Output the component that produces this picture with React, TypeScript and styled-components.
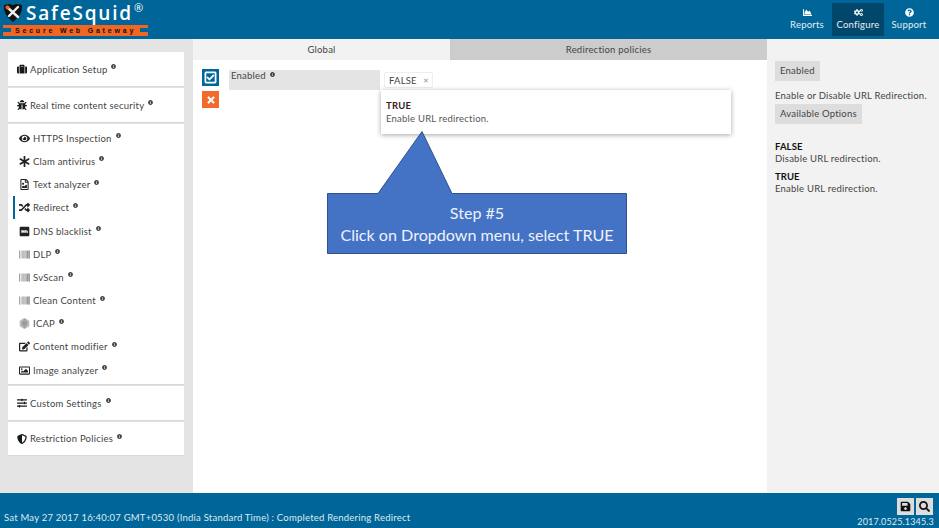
import React from 'react';
import styled, { createGlobalStyle } from 'styled-components';
import {
  FaChartArea, FaCogs, FaQuestionCircle, FaSuitcase, FaBug, FaEye, FaAsterisk, FaRegFileImage, FaRandom,
  FaImdb, FaBarcode, FaEdit, FaRegImage, FaSlidersH, FaShieldAlt, FaInfoCircle, FaRegCheckSquare, FaTimes,
  FaSave, FaSearch, FaFirstOrder,
} from 'react-icons/fa';

const Global = createGlobalStyle`
  html, body { margin: 0; padding: 0; height: 100%; }
  body { font-family: Lato, "Open Sans", sans-serif; font-size: 9.5px; color: #333; overflow: hidden; }
  #root { height: 100%; }
`;

const Page = styled.div`
  position: relative;
  width: 939px;
  height: 528px;
  display: grid;
  grid-template-rows: 39px 1fr 35px;
  overflow: hidden;
`;

const Header = styled.header`
  background: #006699;
  display: flex;
  justify-content: space-between;
  padding-right: 5px;
`;

const Logo = styled.div`
  width: 150px;
  padding: 3px 0 0 3px;
  display: flex;
  flex-direction: column;
`;

const LogoTop = styled.div`
  display: flex;
  align-items: flex-start;
  height: 22px;
  gap: 3px;
`;

const LogoName = styled.span`
  font-family: "Open Sans", sans-serif;
  font-weight: 600;
  font-size: 19px;
  line-height: 21px;
  letter-spacing: 1.8px;
  color: #fff;
  white-space: nowrap;
  sup { font-size: 11px; font-weight: 400; letter-spacing: 0; line-height: 0; vertical-align: 8px; margin-left: 1px; }
`;

const Tagline = styled.div`
  width: 145px;
  height: 11px;
  box-sizing: border-box;
  background: #f26522;
  color: #111;
  font-family: "Liberation Sans", sans-serif;
  font-weight: 700;
  font-size: 7px;
  line-height: 11px;
  letter-spacing: 2.8px;
  padding-left: 12px;
  white-space: nowrap;
  position: relative;
  &::before, &::after {
    content: '';
    position: absolute;
    top: 3px;
    width: 8px;
    height: 4px;
    background: #006699;
  }
  &::before { left: 0; }
  &::after { right: 0; }
`;

const Nav = styled.nav`
  display: flex;
  padding-top: 3px;
  height: 33px;
`;

const NavItem = styled.div<{ $active?: boolean }>`
  width: ${p => (p.$active ? 52 : 50)}px;
  height: 33px;
  display: flex;
  flex-direction: column;
  align-items: center;
  padding-top: 5px;
  box-sizing: border-box;
  gap: 1.5px;
  color: #e6eef3;
  font-size: 9.5px;
  letter-spacing: 0.22px;
  line-height: 12px;
  background: ${p => (p.$active ? '#00476b' : 'transparent')};
  svg { font-size: 9px; color: #fff; display: block; }
`;

const Body = styled.div`
  display: grid;
  grid-template-columns: 193px 574px 172px;
  min-height: 0;
`;

const Sidebar = styled.aside`
  background: #e4e4e4;
  padding: 13px 9px 0 8px;
  display: flex;
  flex-direction: column;
  gap: 2px;
`;

const Card = styled.div<{ $h: number }>`
  background: #fff;
  height: ${p => p.$h}px;
  box-sizing: border-box;
  box-shadow: 0 1px 1px #d8d8d8;
`;

const TopItem = styled.div`
  height: 100%;
  display: flex;
  align-items: center;
  padding-left: 9px;
  font-size: 9.5px;
  letter-spacing: 0.22px;
  color: #444;
  > svg:first-child { width: 10px; height: 10px; margin-right: 3px; color: #1a1a1a; flex: none; }
`;

const SubList = styled.div`
  padding: 2.7px 0 0 5px;
  display: flex;
  flex-direction: column;
`;

const SubItem = styled.div<{ $active?: boolean; $tone?: string }>`
  height: 23.2px;
  display: flex;
  align-items: center;
  padding-left: 4px;
  font-size: 9.5px;
  letter-spacing: 0.22px;
  color: #444;
  border-left: 2px solid ${p => (p.$active ? '#006699' : 'transparent')};
  > svg:first-child { width: 11px; height: 11px; margin-right: 3px; color: ${p => p.$tone || '#222'}; flex: none; }
`;

const Info = styled(FaInfoCircle)`
  width: 5px;
  height: 5px;
  color: #444;
  margin: -5px 0 0 4px;
  flex: none;
`;

const Main = styled.main`
  background: #fff;
  display: flex;
  flex-direction: column;
`;

const Tabs = styled.div`
  display: grid;
  grid-template-columns: 257px 317px;
  height: 21px;
`;

const Tab = styled.div<{ $active?: boolean }>`
  background: ${p => (p.$active ? '#f2f2f2' : '#cccccc')};
  text-align: center;
  line-height: 21px;
  font-size: 9.5px;
  letter-spacing: 0.22px;
  color: #444;
`;

const Form = styled.div`
  display: flex;
  padding: 9px 0 0 9px;
`;

const Actions = styled.div`
  display: flex;
  flex-direction: column;
  gap: 5px;
  width: 27px;
`;

const ActionBtn = styled.div<{ $bg: string; $size: number }>`
  width: 17px;
  height: 17px;
  background: ${p => p.$bg};
  color: #fff;
  display: flex;
  align-items: center;
  justify-content: center;
  svg { width: ${p => p.$size}px; height: ${p => p.$size}px; stroke: #fff; stroke-width: 20; }
`;

const Label = styled.div`
  width: 151px;
  height: 20px;
  margin-top: 1px;
  padding: 0 0 0 2px;
  box-sizing: border-box;
  background: #e4e4e4;
  display: flex;
  align-items: flex-start;
  font-size: 9.5px;
  letter-spacing: 0.22px;
  line-height: 12px;
  color: #444;
  svg { margin-top: 2px; }
`;

const Field = styled.div`
  margin-left: 4px;
`;

const Chip = styled.div`
  width: 49px;
  height: 16px;
  margin-top: 3px;
  box-sizing: border-box;
  border: 1px solid #eeeeee;
  border-radius: 2px;
  display: flex;
  align-items: center;
  padding-left: 4px;
  font-size: 9.5px;
  letter-spacing: 0.2px;
  color: #444;
  span { font-size: 7px; color: #999; margin-left: 6px; letter-spacing: 0; }
`;

const Dropdown = styled.div`
  position: absolute;
  left: 381px;
  top: 90px;
  width: 350px;
  height: 44px;
  box-sizing: border-box;
  background: #fff;
  box-shadow: 0 1px 5px rgba(0, 0, 0, 0.35);
  padding: 9px 5px 0;
  line-height: 13px;
  font-size: 9.5px;
  letter-spacing: 0.22px;
  color: #555;
  strong { display: block; color: #3a2222; font-size: 9.5px; letter-spacing: 0.2px; }
`;

const Callout = styled.div`
  position: absolute;
  left: 327px;
  top: 131px;
  width: 300px;
  height: 123px;
`;

const CalloutArrow = styled.svg`
  position: absolute;
  left: 0;
  top: 0;
`;

const CalloutText = styled.div`
  position: absolute;
  left: 0;
  top: 71px;
  width: 300px;
  text-align: center;
  color: #eef2fa;
  font-family: Lato, sans-serif;
  font-size: 16.1px;
  line-height: 21.5px;
`;

const Panel = styled.aside`
  background: #f2f2f2;
  padding: 22px 4px 0 8px;
  font-size: 9.5px;
  letter-spacing: 0.22px;
  color: #444;
`;

const Tag = styled.div`
  width: fit-content;
  background: #dddddd;
  height: 20px;
  line-height: 20px;
  padding: 0 5px;
`;

const PanelText = styled.div`
  margin: 8px 0 2px;
  line-height: 13px;
  white-space: nowrap;
`;

const Option = styled.div`
  line-height: 11.5px;
  margin-bottom: 8px;
  strong { display: block; color: #111; letter-spacing: 0.1px; line-height: 10.5px; }
`;

const Options = styled.div`
  margin-top: 18px;
`;

const Footer = styled.footer`
  background: #006699;
  color: #dfe9ef;
  display: flex;
  justify-content: space-between;
  align-items: flex-end;
  padding: 5px 5px 0 4px;
  font-size: 9.5px;
  letter-spacing: 0.22px;
  line-height: 13px;
`;

const FooterStatus = styled.span`
  margin-bottom: 4.5px;
`;

const FooterRight = styled.div`
  display: flex;
  flex-direction: column;
  align-items: flex-end;
`;

const Version = styled.span`
  font-size: 9px;
  letter-spacing: 0.15px;
  margin-top: 1px;
  line-height: 12px;
`;

const ToolRow = styled.div`
  display: flex;
  gap: 2px;
  margin-right: 1px;
`;

const ToolBtn = styled.div`
  width: 17px;
  height: 17px;
  background: #dddddd;
  color: #111;
  display: flex;
  align-items: center;
  justify-content: center;
  svg { width: 11px; height: 11px; }
`;

const subItems: [React.ComponentType, string, boolean?, string?][] = [
  [FaEye, 'HTTPS Inspection'],
  [FaAsterisk, 'Clam antivirus'],
  [FaRegFileImage, 'Text analyzer'],
  [FaRandom, 'Redirect', true],
  [FaImdb, 'DNS blacklist'],
  [FaBarcode, 'DLP', false, '#666'],
  [FaBarcode, 'SvScan', false, '#666'],
  [FaBarcode, 'Clean Content', false, '#666'],
  [FaFirstOrder, 'ICAP', false, '#999'],
  [FaEdit, 'Content modifier'],
  [FaRegImage, 'Image analyzer'],
];

export default function App() {
  return (
    <Page>
      <Global />
      <Header>
        <Logo>
          <LogoTop>
            <svg width="20" height="20" viewBox="0 0 20 20">
              <path d="M1 2 L7 1 Q10 3 13 1 L19 2 Q20 12 10 19 Q0 12 1 2 Z" fill="#111" />
              <path d="M4 4 L15 14 M15 4 L6 13" stroke="#f0f0f0" strokeWidth="2.4" strokeLinecap="round" />
              <circle cx="4.5" cy="4.5" r="2" fill="#f26522" />
            </svg>
            <LogoName>SafeSquid<sup>®</sup></LogoName>
          </LogoTop>
          <Tagline>Secure Web Gateway</Tagline>
        </Logo>
        <Nav>
          <NavItem><FaChartArea />Reports</NavItem>
          <NavItem $active><FaCogs />Configure</NavItem>
          <NavItem><FaQuestionCircle />Support</NavItem>
        </Nav>
      </Header>
      <Body>
        <Sidebar>
          <Card $h={34}><TopItem><FaSuitcase />Application Setup<Info /></TopItem></Card>
          <Card $h={34}><TopItem><FaBug />Real time content security<Info /></TopItem></Card>
          <Card $h={260}>
            <SubList>
              {subItems.map(([Icon, name, active, tone]) => (
                <SubItem key={name} $active={active} $tone={tone}><Icon />{name}<Info /></SubItem>
              ))}
            </SubList>
          </Card>
          <Card $h={34}><TopItem><FaSlidersH />Custom Settings<Info /></TopItem></Card>
          <Card $h={33}><TopItem><FaShieldAlt />Restriction Policies<Info /></TopItem></Card>
        </Sidebar>
        <Main>
          <Tabs>
            <Tab $active>Global</Tab>
            <Tab>Redirection policies</Tab>
          </Tabs>
          <Form>
            <Actions>
              <ActionBtn $bg="#006699" $size={13}><FaRegCheckSquare /></ActionBtn>
              <ActionBtn $bg="#f26a2e" $size={10}><FaTimes /></ActionBtn>
            </Actions>
            <Label>Enabled<Info /></Label>
            <Field><Chip>FALSE<span>✕</span></Chip></Field>
          </Form>
        </Main>
        <Panel>
          <Tag>Enabled</Tag>
          <PanelText>Enable or Disable URL Redirection.</PanelText>
          <Tag>Available Options</Tag>
          <Options>
            <Option><strong>FALSE</strong>Disable URL redirection.</Option>
            <Option><strong>TRUE</strong>Enable URL redirection.</Option>
          </Options>
        </Panel>
      </Body>
      <Footer>
        <FooterStatus>Sat May 27 2017 16:40:07 GMT+0530 (India Standard Time) : Completed Rendering Redirect</FooterStatus>
        <FooterRight>
          <ToolRow>
            <ToolBtn><FaSave /></ToolBtn>
            <ToolBtn><FaSearch /></ToolBtn>
          </ToolRow>
          <Version>2017.0525.1345.3</Version>
        </FooterRight>
      </Footer>
      <Dropdown>
        <strong>TRUE</strong>
        Enable URL redirection.
      </Dropdown>
      <Callout>
        <CalloutArrow width="300" height="123" viewBox="0 0 300 123">
          <path d="M0.5 62.5 H51 L95 0.5 L125 62.5 H299.5 V122.5 H0.5 Z" fill="#4472c4" stroke="#2f528f" />
        </CalloutArrow>
        <CalloutText>Step #5<br />Click on Dropdown menu, select TRUE</CalloutText>
      </Callout>
    </Page>
  );
}
